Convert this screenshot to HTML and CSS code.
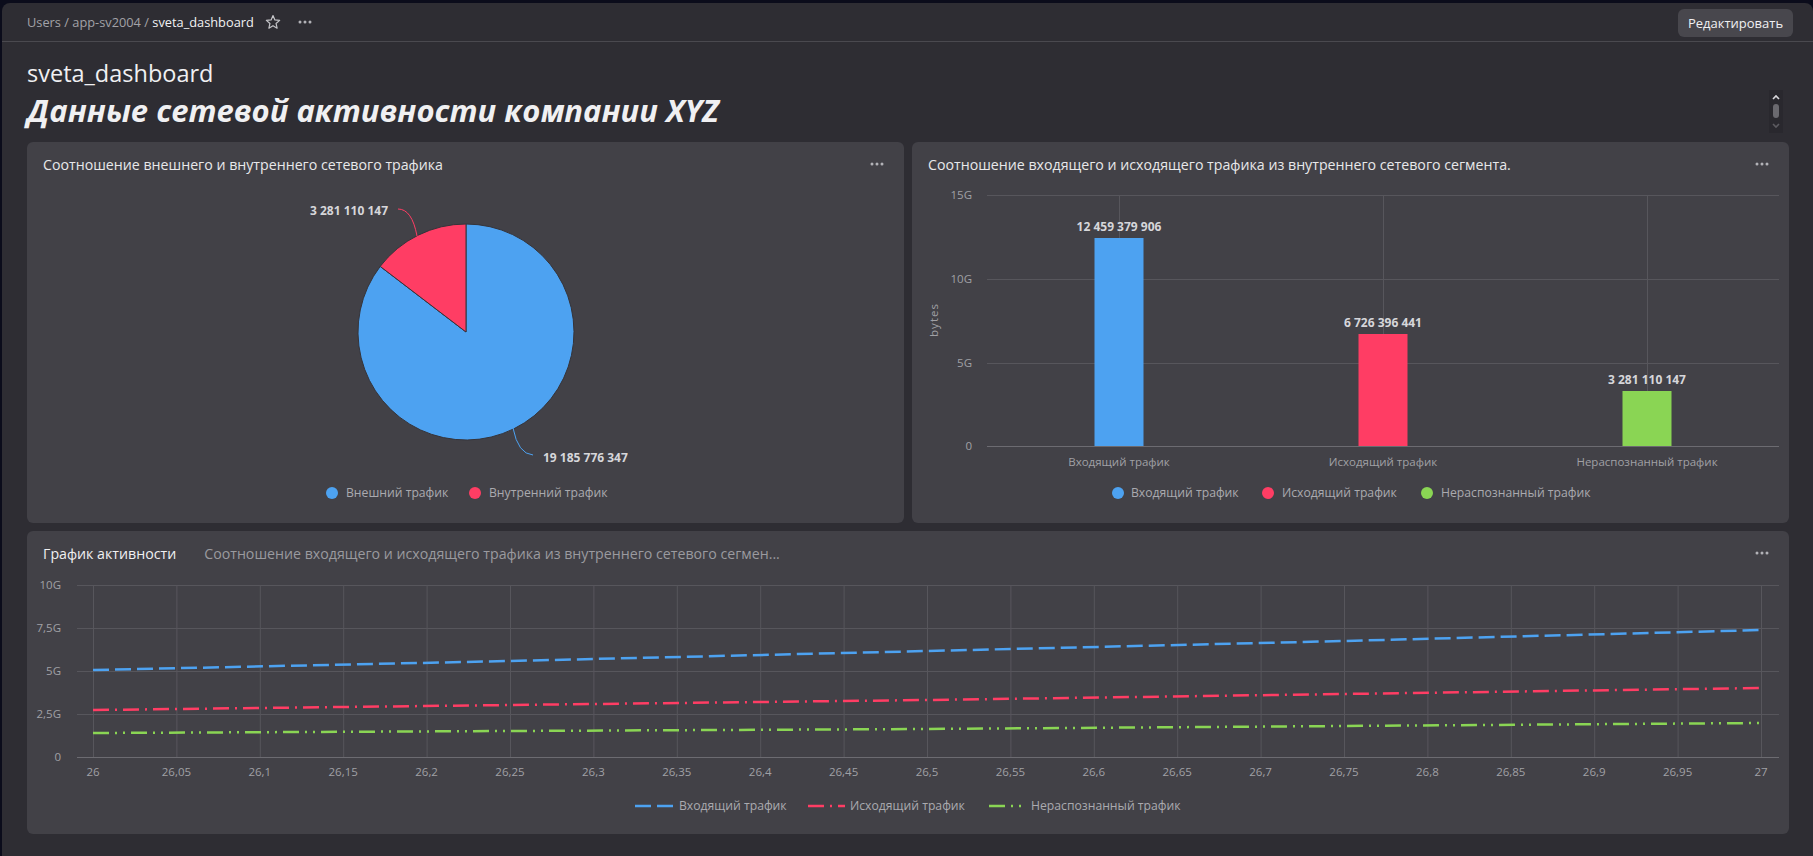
FILE: index.html
```html
<!DOCTYPE html>
<html lang="ru">
<head>
<meta charset="utf-8">
<title>sveta_dashboard</title>
<link rel="stylesheet" href="styles.css">
</head>
<body>
<div class="app">
  <header class="topbar">
    <nav class="crumbs">
      <span class="crumb">Users / app-sv2004 / </span><span class="crumb current">sveta_dashboard</span>
      <svg class="star" width="16" height="16" viewBox="0 0 16 16"><polygon points="8,1.5 9.88,5.91 14.66,6.34 11.04,9.49 12.11,14.16 8,11.7 3.89,14.16 4.96,9.49 1.34,6.34 6.12,5.91" fill="none" stroke="#c4c4c8" stroke-width="1.2" stroke-linejoin="round"/></svg>
      <svg class="more" width="16" height="16" viewBox="0 0 16 16"><circle cx="3" cy="8" r="1.5"/><circle cx="8" cy="8" r="1.5"/><circle cx="13" cy="8" r="1.5"/></svg>
    </nav>
    <button class="edit-btn">Редактировать</button>
  </header>

  <main class="content">
    <div class="titles">
      <h1 class="dash-name">sveta_dashboard</h1>
      <h2 class="dash-heading">Данные сетевой активности компании XYZ</h2>
      <div class="scroller">
        <svg width="14" height="43" viewBox="0 0 14 43">
          <polyline points="4,9 7,6 10,9" fill="none" stroke="#d8d8dc" stroke-width="1.6"/>
          <rect x="4" y="14" width="6" height="14" rx="3" fill="#6a696f"/>
          <polyline points="4,34 7,37 10,34" fill="none" stroke="#5c5b61" stroke-width="1.6"/>
        </svg>
      </div>
    </div>

    <div class="grid">
      <section class="panel">
        <div class="panel-head">
          <span class="panel-title">Соотношение внешнего и внутреннего сетевого трафика</span>
          <svg class="more" width="16" height="16" viewBox="0 0 16 16"><circle cx="3" cy="8" r="1.5"/><circle cx="8" cy="8" r="1.5"/><circle cx="13" cy="8" r="1.5"/></svg>
        </div>
        <svg class="chart" width="877" height="337" viewBox="0 0 877 337">
          <path d="M439,146 L353.2,80.4 A108,108 0 1,0 439,38 Z" fill="#4da2f1" stroke="#35343a" stroke-width="1"/>
          <path d="M439,146 L439,38 A108,108 0 0,0 353.2,80.4 Z" fill="#ff3d64" stroke="#35343a" stroke-width="1"/>
          <path d="M371,23 Q385,23 390,50" fill="none" stroke="#ff3d64" stroke-width="1"/>
          <path d="M486,242 Q491,268 506,269" fill="none" stroke="#4da2f1" stroke-width="1"/>
          <text class="val" x="361" y="29" text-anchor="end">3 281 110 147</text>
          <text class="val" x="516" y="276">19 185 776 347</text>
          <circle cx="305" cy="307" r="6" fill="#4da2f1"/>
          <text class="legend" x="319" y="311">Внешний трафик</text>
          <circle cx="448" cy="307" r="6" fill="#ff3d64"/>
          <text class="legend" x="462" y="311">Внутренний трафик</text>
        </svg>
      </section>

      <section class="panel">
        <div class="panel-head">
          <span class="panel-title">Соотношение входящего и исходящего трафика из внутреннего сетевого сегмента.</span>
          <svg class="more" width="16" height="16" viewBox="0 0 16 16"><circle cx="3" cy="8" r="1.5"/><circle cx="8" cy="8" r="1.5"/><circle cx="13" cy="8" r="1.5"/></svg>
        </div>
        <svg class="chart" width="877" height="337" viewBox="0 0 877 337">
          <g class="grid-lines">
            <line x1="75" y1="9.5" x2="867" y2="9.5"/>
            <line x1="75" y1="93.5" x2="867" y2="93.5"/>
            <line x1="75" y1="177.5" x2="867" y2="177.5"/>
            <line x1="207.5" y1="9" x2="207.5" y2="260"/>
            <line x1="471.5" y1="9" x2="471.5" y2="260"/>
            <line x1="735.5" y1="9" x2="735.5" y2="260"/>
          </g>
          <rect x="182.5" y="52" width="49" height="208" fill="#4da2f1"/>
          <rect x="446.5" y="148" width="49" height="112" fill="#ff3d64"/>
          <rect x="710.5" y="205" width="49" height="55" fill="#8ad554"/>
          <line class="axis-line" x1="75" y1="260.5" x2="867" y2="260.5"/>
          <text class="axis" x="60" y="13" text-anchor="end">15G</text>
          <text class="axis" x="60" y="97" text-anchor="end">10G</text>
          <text class="axis" x="60" y="181" text-anchor="end">5G</text>
          <text class="axis" x="60" y="264" text-anchor="end">0</text>
          <text class="axis ytitle" x="0" y="0" text-anchor="middle" transform="translate(26,134) rotate(-90)">bytes</text>
          <text class="val" x="207" y="45" text-anchor="middle">12 459 379 906</text>
          <text class="val" x="471" y="141" text-anchor="middle">6 726 396 441</text>
          <text class="val" x="735" y="198" text-anchor="middle">3 281 110 147</text>
          <text class="axis" x="207" y="280" text-anchor="middle">Входящий трафик</text>
          <text class="axis" x="471" y="280" text-anchor="middle">Исходящий трафик</text>
          <text class="axis" x="735" y="280" text-anchor="middle">Нераспознанный трафик</text>
          <circle cx="206" cy="307" r="6" fill="#4da2f1"/>
          <text class="legend" x="219" y="311">Входящий трафик</text>
          <circle cx="356" cy="307" r="6" fill="#ff3d64"/>
          <text class="legend" x="370" y="311">Исходящий трафик</text>
          <circle cx="515" cy="307" r="6" fill="#8ad554"/>
          <text class="legend" x="529" y="311">Нераспознанный трафик</text>
        </svg>
      </section>

      <section class="panel wide">
        <div class="panel-head">
          <div class="tabs">
            <span class="tab active">График активности</span>
            <span class="tab">Соотношение входящего и исходящего трафика из внутреннего сетевого сегмен...</span>
          </div>
          <svg class="more" width="16" height="16" viewBox="0 0 16 16"><circle cx="3" cy="8" r="1.5"/><circle cx="8" cy="8" r="1.5"/><circle cx="13" cy="8" r="1.5"/></svg>
        </div>
        <svg class="chart" width="1762" height="259" viewBox="0 0 1762 259">
          <g class="grid-lines">
            <line x1="50" y1="10.5" x2="1752" y2="10.5"/>
            <line x1="50" y1="53.5" x2="1752" y2="53.5"/>
            <line x1="50" y1="96.5" x2="1752" y2="96.5"/>
            <line x1="50" y1="139.5" x2="1752" y2="139.5"/>
            <line x1="66.5" y1="10" x2="66.5" y2="182"/>
            <line x1="149.9" y1="10" x2="149.9" y2="182"/>
            <line x1="233.3" y1="10" x2="233.3" y2="182"/>
            <line x1="316.7" y1="10" x2="316.7" y2="182"/>
            <line x1="400.1" y1="10" x2="400.1" y2="182"/>
            <line x1="483.5" y1="10" x2="483.5" y2="182"/>
            <line x1="566.9" y1="10" x2="566.9" y2="182"/>
            <line x1="650.3" y1="10" x2="650.3" y2="182"/>
            <line x1="733.7" y1="10" x2="733.7" y2="182"/>
            <line x1="817.1" y1="10" x2="817.1" y2="182"/>
            <line x1="900.5" y1="10" x2="900.5" y2="182"/>
            <line x1="983.9" y1="10" x2="983.9" y2="182"/>
            <line x1="1067.3" y1="10" x2="1067.3" y2="182"/>
            <line x1="1150.7" y1="10" x2="1150.7" y2="182"/>
            <line x1="1234.1" y1="10" x2="1234.1" y2="182"/>
            <line x1="1317.5" y1="10" x2="1317.5" y2="182"/>
            <line x1="1400.9" y1="10" x2="1400.9" y2="182"/>
            <line x1="1484.3" y1="10" x2="1484.3" y2="182"/>
            <line x1="1567.7" y1="10" x2="1567.7" y2="182"/>
            <line x1="1651.1" y1="10" x2="1651.1" y2="182"/>
            <line x1="1734.5" y1="10" x2="1734.5" y2="182"/>
          </g>
          <line class="axis-line" x1="50" y1="182.5" x2="1752" y2="182.5"/>
          <text class="axis" x="34" y="14" text-anchor="end">10G</text>
          <text class="axis" x="34" y="57" text-anchor="end">7,5G</text>
          <text class="axis" x="34" y="100" text-anchor="end">5G</text>
          <text class="axis" x="34" y="143" text-anchor="end">2,5G</text>
          <text class="axis" x="34" y="186" text-anchor="end">0</text>
          <g class="xlabels">
            <text x="66" y="201">26</text>
            <text x="149.4" y="201">26,05</text>
            <text x="232.8" y="201">26,1</text>
            <text x="316.2" y="201">26,15</text>
            <text x="399.6" y="201">26,2</text>
            <text x="483" y="201">26,25</text>
            <text x="566.4" y="201">26,3</text>
            <text x="649.8" y="201">26,35</text>
            <text x="733.2" y="201">26,4</text>
            <text x="816.6" y="201">26,45</text>
            <text x="900" y="201">26,5</text>
            <text x="983.4" y="201">26,55</text>
            <text x="1066.8" y="201">26,6</text>
            <text x="1150.2" y="201">26,65</text>
            <text x="1233.6" y="201">26,7</text>
            <text x="1317" y="201">26,75</text>
            <text x="1400.4" y="201">26,8</text>
            <text x="1483.8" y="201">26,85</text>
            <text x="1567.2" y="201">26,9</text>
            <text x="1650.6" y="201">26,95</text>
            <text x="1734" y="201">27</text>
          </g>
          <polyline class="ln ln-blue" points="66,95 483,86 900,76 1317,66 1734,55"/>
          <polyline class="ln ln-red" points="66,135 483,130 900,125 1317,119 1734,113"/>
          <polyline class="ln ln-green" points="66,158 483,156 900,154 1317,151 1734,148"/>
          <line class="ln ln-blue" x1="608" y1="231" x2="646" y2="231"/>
          <text class="legend" x="652" y="235">Входящий трафик</text>
          <line class="ln ln-red" x1="781" y1="231" x2="818" y2="231"/>
          <text class="legend" x="823" y="235">Исходящий трафик</text>
          <line class="ln ln-green" x1="962" y1="231" x2="995" y2="231"/>
          <text class="legend" x="1004" y="235">Нераспознанный трафик</text>
        </svg>
      </section>
    </div>
  </main>
</div>
</body>
</html>
```

FILE: styles.css
```css
html, body {
  margin: 0;
  padding: 0;
}

body {
  background: #0b0c1b;
  font-family: "Open Sans", "Noto Sans", sans-serif;
  color: #e8e8ea;
  overflow: hidden;
}

.app {
  margin: 3px 0 0 2px;
  height: 853px;
  background: #2e2d33;
  border-radius: 8px 8px 0 0;
  overflow: hidden;
}

.topbar {
  height: 38px;
  border-bottom: 1px solid #4a494f;
  display: flex;
  align-items: center;
  justify-content: space-between;
  padding: 0 20px 0 25px;
}

.crumbs {
  display: flex;
  align-items: center;
  font-size: 12.8px;
  white-space: pre;
}

.crumb {
  color: #a2a2a7;
}

.crumb.current {
  color: #f2f2f4;
}

.star {
  margin-left: 11px;
}

.more {
  fill: #b2b2b7;
}

.crumbs .more {
  margin-left: 16px;
}

.edit-btn {
  height: 28px;
  width: 115px;
  border: none;
  border-radius: 6px;
  background: #48474d;
  color: #f0f0f2;
  font-family: "Open Sans", "Noto Sans", sans-serif;
  font-size: 13px;
  padding: 0;
  margin-top: 1px;
}

.content {
  padding: 0 24px 0 25px;
}

.titles {
  position: relative;
  padding-top: 17px;
}

.dash-name {
  margin: 0;
  font-size: 23.5px;
  line-height: 28px;
  font-weight: 400;
  color: #f0f0f2;
}

.dash-heading {
  margin: 5px 0 0;
  font-size: 31px;
  line-height: 36px;
  font-weight: 700;
  font-style: italic;
  color: #f0f0f2;
}

.scroller {
  position: absolute;
  top: 48px;
  right: 6px;
  width: 14px;
  height: 43px;
  background: #29282e;
}

.scroller svg {
  display: block;
}

.grid {
  margin-top: 14px;
  display: grid;
  grid-template-columns: 1fr 1fr;
  grid-template-rows: 381px 303px;
  gap: 8px;
}

.panel {
  background: #424147;
  border-radius: 6px;
  overflow: hidden;
}

.panel.wide {
  grid-column: 1 / 3;
}

.panel-head {
  height: 44px;
  display: flex;
  align-items: center;
  justify-content: space-between;
  padding: 0 19px 0 16px;
}

.panel-title {
  font-size: 14.2px;
  color: #e8e8ea;
}

.tabs {
  display: flex;
  gap: 28px;
  font-size: 14.2px;
}

.tab {
  color: #9a9a9f;
}

.tab.active {
  color: #f0f0f2;
}

.chart {
  display: block;
}

.chart text {
  font-family: "Open Sans", "Noto Sans", sans-serif;
}

.grid-lines line {
  stroke: #57565c;
  stroke-width: 1;
}

.axis-line {
  stroke: #6c6b71;
  stroke-width: 1;
}

.axis,
.xlabels text {
  font-size: 11.5px;
  fill: #a0a0a5;
}

.xlabels text {
  text-anchor: middle;
}

.ytitle {
  letter-spacing: 1px;
}

.val {
  font-size: 12px;
  font-weight: 700;
  fill: #d6d6da;
}

.legend {
  font-size: 12.2px;
  fill: #aaaaaf;
}

.ln {
  fill: none;
  stroke-width: 2.5;
}

.ln-blue {
  stroke: #4da2f1;
  stroke-dasharray: 16 6;
}

.ln-red {
  stroke: #ff3d64;
  stroke-dasharray: 16 6 2 6;
}

.ln-green {
  stroke: #8ad554;
  stroke-dasharray: 16 6 2 6 2 6;
}
```
